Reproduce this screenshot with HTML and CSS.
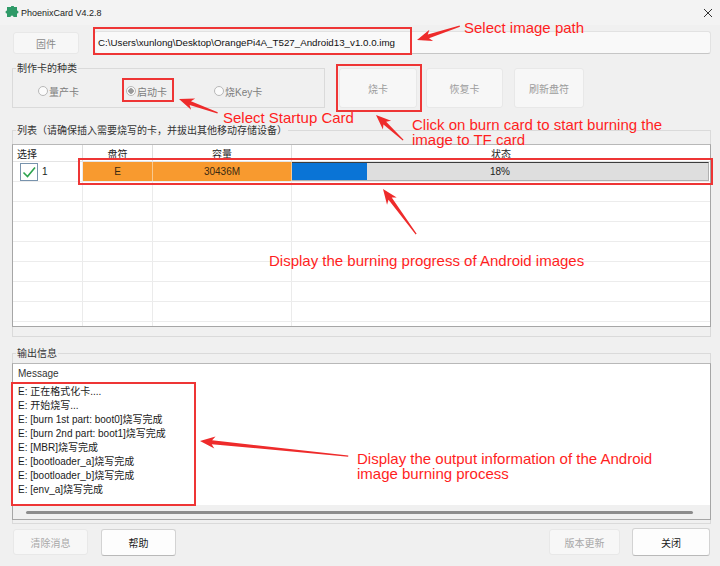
FILE: index.html
```html
<!DOCTYPE html>
<html lang="zh-CN">
<head>
    <meta charset="UTF-8">
    <meta name="viewport" content="width=device-width, initial-scale=1.0">
    <title>PhoenixCard V4.2.8</title>
    <link rel="stylesheet" href="styles.css">
</head>
<body>

<div class="window">
    <div class="titlebar">
        <svg class="app-icon" width="14" height="13" viewBox="0 0 14 13">
            <path d="M3 1h3a1.5 1.5 0 0 1 3 0h3v3.5a1.5 1.5 0 0 1 0 3V11h-3.5a1.5 1.5 0 0 0-3 0H2V7.5a1.5 1.5 0 0 1 0-3V1z" fill="#2f9a68"/>
        </svg>
        <span class="title">PhoenixCard V4.2.8</span>
        <svg class="close" width="10" height="10" viewBox="0 0 10 10">
            <path d="M1 1L9 9M9 1L1 9" stroke="#333" stroke-width="1"/>
        </svg>
    </div>

    <div class="content">
        <div class="row-path">
            <button class="btn btn-firmware">固件</button>
            <div class="path-field">C:\Users\xunlong\Desktop\OrangePi4A_T527_Android13_v1.0.0.img</div>
        </div>

        <div class="row-mode">
            <fieldset class="group group-mode">
                <legend>制作卡的种类</legend>
                <div class="radios">
                    <label class="radio"><span class="dot"></span>量产卡</label>
                    <label class="radio checked"><span class="dot"></span>启动卡</label>
                    <label class="radio"><span class="dot"></span>烧Key卡</label>
                </div>
            </fieldset>
            <button class="btn btn-big btn-burn">烧卡</button>
            <button class="btn btn-big btn-restore">恢复卡</button>
            <button class="btn btn-big btn-refresh">刷新盘符</button>
        </div>

        <fieldset class="group group-list">
            <legend>列表（请确保插入需要烧写的卡，并拔出其他移动存储设备）</legend>
            <div class="grid">
                <div class="grid-row head">
                    <div class="cell sel">选择</div>
                    <div class="cell">盘符</div>
                    <div class="cell">容量</div>
                    <div class="cell">状态</div>
                </div>
                <div class="grid-row">
                    <div class="cell sel">
                        <span class="check">
                            <svg width="16" height="16" viewBox="0 0 16 16">
                                <path d="M2.5 8.5L6.5 12.5L14 3.5" fill="none" stroke="#2ea44f" stroke-width="1.6"/>
                            </svg>
                        </span>
                        <span class="num">1</span>
                    </div>
                    <div class="cell orange">E</div>
                    <div class="cell orange">30436M</div>
                    <div class="cell status">
                        <div class="progress">
                            <div class="progress-fill" style="width: 18%"></div>
                            <span class="progress-text">18%</span>
                        </div>
                    </div>
                </div>
                <div class="grid-row"><div class="cell"></div><div class="cell"></div><div class="cell"></div><div class="cell"></div></div>
                <div class="grid-row"><div class="cell"></div><div class="cell"></div><div class="cell"></div><div class="cell"></div></div>
                <div class="grid-row"><div class="cell"></div><div class="cell"></div><div class="cell"></div><div class="cell"></div></div>
                <div class="grid-row"><div class="cell"></div><div class="cell"></div><div class="cell"></div><div class="cell"></div></div>
                <div class="grid-row"><div class="cell"></div><div class="cell"></div><div class="cell"></div><div class="cell"></div></div>
                <div class="grid-row"><div class="cell"></div><div class="cell"></div><div class="cell"></div><div class="cell"></div></div>
                <div class="grid-row"><div class="cell"></div><div class="cell"></div><div class="cell"></div><div class="cell"></div></div>
                <div class="grid-row"><div class="cell"></div><div class="cell"></div><div class="cell"></div><div class="cell"></div></div>
            </div>
        </fieldset>

        <fieldset class="group group-out">
            <legend>输出信息</legend>
            <div class="log">
                <div class="log-text">
                    <div class="log-head">Message</div>
                    <div>E: 正在格式化卡....</div>
                    <div>E: 开始烧写...</div>
                    <div>E: [burn 1st part: boot0]烧写完成</div>
                    <div>E: [burn 2nd part: boot1]烧写完成</div>
                    <div>E: [MBR]烧写完成</div>
                    <div>E: [bootloader_a]烧写完成</div>
                    <div>E: [bootloader_b]烧写完成</div>
                    <div>E: [env_a]烧写完成</div>
                </div>
                <div class="hscroll"><div class="thumb"></div></div>
            </div>
        </fieldset>

        <div class="row-bottom">
            <button class="btn btn-clear">清除消息</button>
            <button class="btn btn-on btn-help">帮助</button>
            <button class="btn btn-update">版本更新</button>
            <button class="btn btn-on btn-close">关闭</button>
        </div>
    </div>

    <!-- annotations drawn over the screenshot -->
    <div class="notes">
        <div class="mark mark-path"></div>
        <div class="mark mark-mode"></div>
        <div class="mark mark-burn"></div>
        <div class="mark mark-row"></div>
        <div class="mark mark-log"></div>

        <div class="note note-path">Select image path</div>
        <div class="note note-mode">Select Startup Card</div>
        <div class="note note-burn">Click on burn card to start burning the<br>image to TF card</div>
        <div class="note note-row">Display the burning progress of Android images</div>
        <div class="note note-log">Display the output information of the Android<br>image burning process</div>

        <svg class="arrows" width="720" height="566" viewBox="0 0 720 566">
            <g fill="#ee2b2b">
                <path transform="translate(417 40) rotate(-18)" d="M0 0L15 -6L12 -2L45 -0.6L45 0.6L12 2L15 6Z"/>
                <path transform="translate(179 99) rotate(19.7)" d="M0 0L15 -6L12 -2L41 -0.6L41 0.6L12 2L15 6Z"/>
                <path transform="translate(376 115) rotate(42.8)" d="M0 0L15 -6L12 -2L37 -0.6L37 0.6L12 2L15 6Z"/>
                <path transform="translate(383 189) rotate(53.7)" d="M0 0L15 -6L12 -2L56 -0.6L56 0.6L12 2L15 6Z"/>
                <path transform="translate(200 441) rotate(5.8)" d="M0 0L15 -6L12 -2L149 -0.6L149 0.6L12 2L15 6Z"/>
            </g>
        </svg>
    </div>
</div>

</body>
</html>
```

FILE: styles.css
```css
body {
    margin: 0;
    font-family: "Liberation Sans", "Noto Sans CJK SC", sans-serif;
    font-size: 10px;
    color: #1a1a1a;
}
.window {
    position: relative;
    width: 720px;
    height: 566px;
    background: #f0f0f0;
    overflow: hidden;
}
.titlebar {
    display: flex;
    align-items: center;
    height: 25px;
    padding: 0 7px 0 5px;
    box-sizing: border-box;
    background: #f3f3f3;
}
.title {
    margin-left: 2px;
    font-size: 9px;
    color: #222;
}
.close {
    margin-left: auto;
}
.content {
    padding: 0 9px 0 12px;
}

/* buttons */
.btn {
    font-family: inherit;
    font-size: 10px;
    padding: 0;
    box-sizing: border-box;
    border: 1px solid #e8e8e8;
    border-radius: 3px;
    background: #f7f7f7;
    color: #9c9c9c;
}
.btn-on {
    border-color: #d3d3d3;
    border-bottom-color: #b9b9b9;
    background: #fdfdfd;
    color: #1a1a1a;
}

/* path row */
.row-path {
    display: flex;
    height: 24px;
    margin-top: 6px;
}
.btn-firmware {
    width: 66px;
    height: 22px;
    margin: 1px 0 0 1px;
    color: #8a8a8a;
}
.path-field {
    width: 617px;
    height: 23px;
    margin-left: 15px;
    padding-left: 3px;
    box-sizing: border-box;
    border: 1px solid #e2e2e2;
    border-bottom-color: #c6c6c6;
    border-radius: 3px;
    background: #f9f9f9;
    font-size: 9.75px;
    line-height: 21px;
    white-space: nowrap;
    color: #111;
}

/* group boxes */
.group {
    margin: 0;
    padding: 0;
    min-width: 0;
    border: 1px solid #dadada;
}
.group legend {
    margin-left: 3px;
    padding: 2px 1px 0;
    font-size: 10px;
    line-height: 12px;
    color: #333;
}

/* card type row */
.row-mode {
    display: flex;
    align-items: flex-start;
    margin-top: 6px;
}
.group-mode {
    width: 313px;
    height: 47px;
    box-sizing: border-box;
}
.radios {
    display: flex;
    align-items: center;
    gap: 47px;
    height: 32px;
    padding-left: 25px;
}
.radio {
    display: flex;
    align-items: center;
    color: #7d7d7d;
}
.dot {
    width: 10px;
    height: 10px;
    margin-right: 1px;
    box-sizing: border-box;
    border: 1px solid #b8b8b8;
    border-radius: 50%;
    background: #fbfbfb;
}
.radio.checked .dot {
    background: radial-gradient(circle, #9a9a9a 0 2.5px, #fbfbfb 3px);
}
.btn-big {
    height: 40px;
    margin-top: 7px;
}
.btn-burn {
    width: 78px;
    margin-left: 14px;
}
.btn-restore {
    width: 77px;
    margin-left: 9px;
}
.btn-refresh {
    width: 70px;
    margin-left: 11px;
}

/* device list */
.group-list {
    margin-top: 15px;
    padding-bottom: 9px;
}
.grid {
    height: 183px;
    margin: 7px -1px 0;
    box-sizing: border-box;
    border: 1px solid #a6a6a6;
    border-top-color: #b8b8b8;
    background: #fff;
    overflow: hidden;
}
.grid-row {
    display: grid;
    grid-template-columns: 70px 70px 139px 1fr;
    height: 20px;
    box-sizing: border-box;
    border-bottom: 1px solid #ececec;
}
.grid-row.head {
    height: 17px;
    border-bottom-color: #e4e4e4;
}
.cell {
    display: flex;
    align-items: center;
    justify-content: center;
    border-right: 1px solid #ebebeb;
    color: #222;
}
.cell:last-child {
    border-right: none;
}
.head .cell {
    border-right-color: #dedede;
}
.cell.sel {
    justify-content: flex-start;
    padding-left: 4px;
}
.grid-row .cell.sel .check {
    margin-left: 3px;
}
.check {
    display: flex;
    align-items: center;
    justify-content: center;
    width: 18px;
    height: 18px;
    box-sizing: border-box;
    border: 1px solid #7893ad;
    background: #fff;
}
.num {
    margin-left: 4px;
}
.orange {
    background: #f89a2f;
    border-right-color: #f8c990;
    color: #3a2a12;
}
.status {
    align-items: stretch;
}
.progress {
    position: relative;
    flex: 1;
    display: flex;
    margin-right: 1px;
    box-sizing: border-box;
    border-top: 1px solid #3c3c3c;
    border-bottom: 1px solid #b0b0b0;
    border-right: 1px solid #b0b0b0;
    background: #dedede;
}
.progress-fill {
    background: #0a74d6;
}
.progress-text {
    position: absolute;
    left: 0;
    right: 0;
    top: 3px;
    text-align: center;
    color: #222;
}

/* output */
.group-out {
    margin-top: 9px;
    padding-bottom: 3px;
}
.log {
    display: flex;
    flex-direction: column;
    height: 157px;
    margin: 3px -1px 0;
    box-sizing: border-box;
    border: 1px solid #a6a6a6;
    border-top-color: #b8b8b8;
    background: #fff;
}
.log-text {
    flex: 1;
    padding: 3px 5px;
    line-height: 14px;
    color: #1a1a1a;
}
.log-head {
    margin-bottom: 4px;
    color: #333;
}
.hscroll {
    height: 14px;
    padding-top: 6px;
    box-sizing: border-box;
    background: #f0f0f0;
}
.thumb {
    height: 3px;
    margin: 0 17px 0 13px;
    border-radius: 2px;
    background: #8c8c8c;
}

/* bottom buttons */
.row-bottom {
    display: flex;
    align-items: center;
    height: 28px;
    margin-top: 4px;
}
.btn-clear {
    width: 75px;
    height: 26px;
    margin-left: 1px;
    color: #a8a8a8;
}
.btn-help {
    width: 75px;
    height: 27px;
    margin-left: 13px;
}
.btn-update {
    width: 71px;
    height: 26px;
    margin-left: auto;
    color: #a8a8a8;
}
.btn-close {
    width: 78px;
    height: 28px;
    margin-left: 12px;
    margin-right: 1px;
}

/* annotations */
.notes {
    position: absolute;
    left: 0;
    top: 0;
    width: 720px;
    height: 566px;
    pointer-events: none;
}
.arrows {
    position: absolute;
    left: 0;
    top: 0;
}
.mark {
    position: absolute;
    box-sizing: border-box;
    border: 2px solid #ee3535;
}
.mark-path {
    left: 93px;
    top: 27px;
    width: 319px;
    height: 28px;
}
.mark-mode {
    left: 122px;
    top: 78px;
    width: 52px;
    height: 24px;
}
.mark-burn {
    left: 336px;
    top: 64px;
    width: 86px;
    height: 48px;
}
.mark-row {
    left: 78px;
    top: 158px;
    width: 635px;
    height: 27px;
}
.mark-log {
    left: 11px;
    top: 382px;
    width: 185px;
    height: 124px;
}
.note {
    position: absolute;
    font-family: "Liberation Sans", sans-serif;
    font-size: 15px;
    line-height: 15px;
    color: #ff1e1e;
    white-space: nowrap;
}
.note-path {
    left: 464px;
    top: 20px;
}
.note-mode {
    left: 223px;
    top: 110px;
}
.note-burn {
    left: 412px;
    top: 117px;
}
.note-row {
    left: 269px;
    top: 253px;
}
.note-log {
    left: 357px;
    top: 451px;
}
```
